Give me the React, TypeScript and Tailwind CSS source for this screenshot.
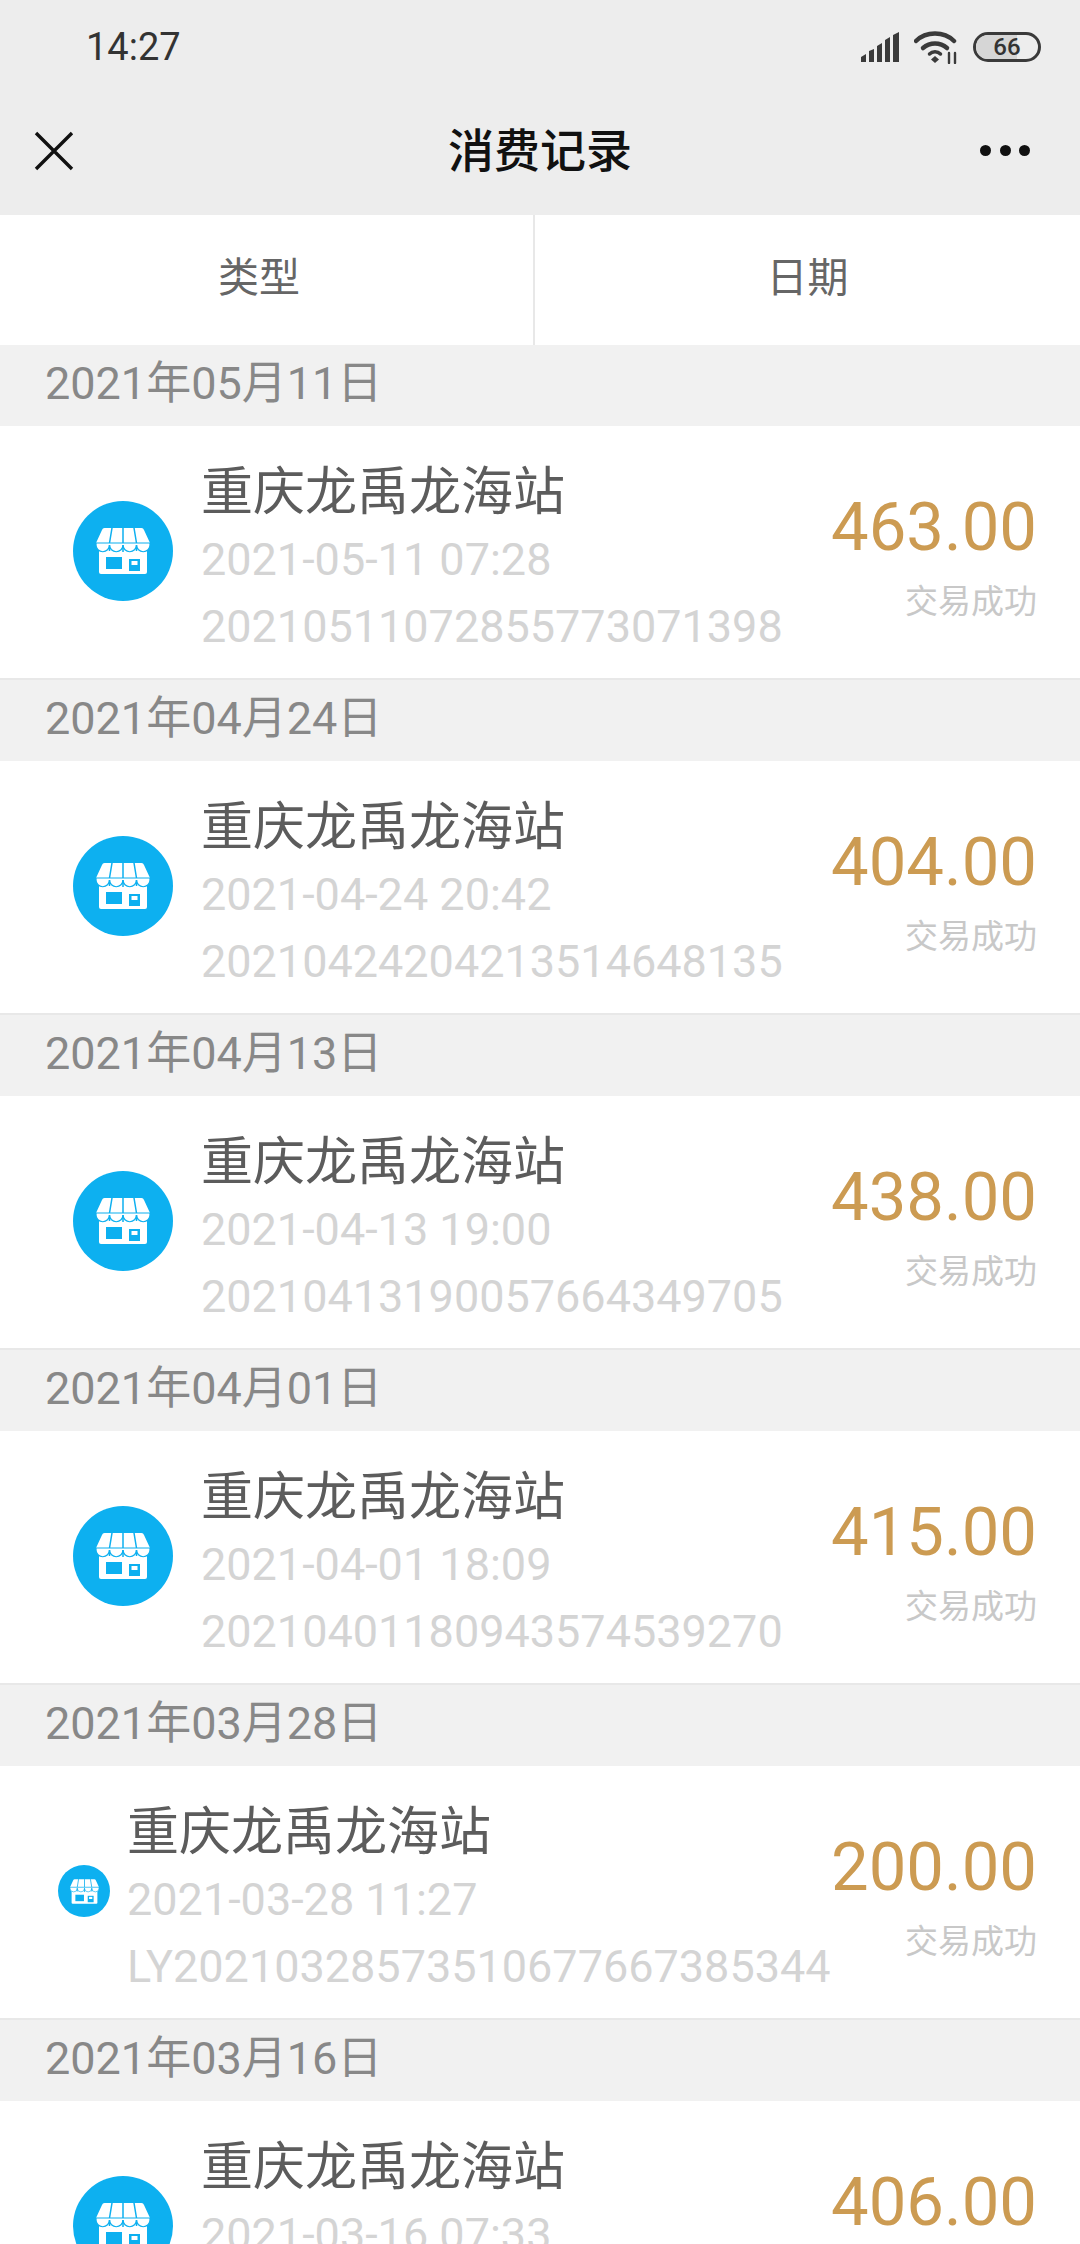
import React from 'react';

const records = [
  { day: '2021年05月11日', time: '2021-05-11 07:28', no: '20210511072855773071398', amount: '463.00' },
  { day: '2021年04月24日', time: '2021-04-24 20:42', no: '20210424204213514648135', amount: '404.00' },
  { day: '2021年04月13日', time: '2021-04-13 19:00', no: '20210413190057664349705', amount: '438.00' },
  { day: '2021年04月01日', time: '2021-04-01 18:09', no: '20210401180943574539270', amount: '415.00' },
  { day: '2021年03月28日', time: '2021-03-28 11:27', no: 'LY20210328573510677667385344', amount: '200.00', small: true },
  { day: '2021年03月16日', time: '2021-03-16 07:33', no: '', amount: '406.00' },
];

const ShopIcon = ({ small }: { small?: boolean }) => (
  <div
    className={
      small
        ? 'flex h-[52px] w-[52px] shrink-0 items-center justify-center rounded-full bg-[#0db0f0]'
        : 'flex h-[100px] w-[100px] shrink-0 items-center justify-center rounded-full bg-[#0db0f0]'
    }
  >
    <svg viewBox="0 0 54 46" className={small ? 'h-[25px] w-[29px]' : 'h-[46px] w-[54px]'}>
      <rect x="3" y="20" width="48" height="26" rx="2" fill="#fff" />
      <rect x="10" y="29" width="16" height="12" fill="#0db0f0" />
      <rect x="33" y="31" width="11" height="12" fill="#0db0f0" />
      <rect x="35.500" y="33" width="6" height="4" fill="#fff" />
      <path d="M9 0h36a3 3 0 0 1 3 2l6 13H0L6 2a3 3 0 0 1 3-2z" fill="#fff" />
      <path d="M0 15h54v2a6.750 6.750 0 0 1-13.500 0 6.750 6.750 0 0 1-13.500 0 6.750 6.750 0 0 1-13.500 0A6.750 6.750 0 0 1 0 17z" fill="#fff" stroke="#0db0f0" strokeWidth="1.200" />
      <path d="M16 0l-2.500 15M27 0v15M38 0l2.500 15M13.500 17v6M27 17v7M40.500 17v6" stroke="#0db0f0" strokeWidth="1.500" fill="none" />
    </svg>
  </div>
);

const App: React.FC = () => {
  return (
    <div className="h-[2244px] w-[1080px] overflow-hidden bg-white font-['Roboto','Noto_Sans_CJK_SC',sans-serif]">
      <div className="h-[215px] bg-[#ededed]">
        <div className="flex h-[92px] items-center justify-between pl-[86px] pr-[39px] pt-[2px]">
          <span className="text-[38px] leading-none text-[#333]">14:27</span>
          <div className="flex items-center gap-[13px]">
            <svg viewBox="0 0 40 30" className="h-[30px] w-[40px]" fill="#3a3a3a">
              <path d="M0 30v-5l5-3v8zM8 30V19l5-2v13zM16 30V14l5-3v19zM24 30V8l5-3v25zM32 30V3l6-3v30z" />
            </svg>
            <svg viewBox="0 0 46 34" className="h-[34px] w-[46px]" fill="none" stroke="#3a3a3a" strokeLinecap="round">
              <path d="M2 11C12 1 30 1 40 11" strokeWidth="4.500" />
              <path d="M9 18c7-6 17-6 24 0" strokeWidth="4.500" />
              <path d="M15.500 24c3-3 8-3 11 0" strokeWidth="3.500" />
              <path d="M21 26l4 3.500-4 3.500-4-3.500z" fill="#3a3a3a" strokeWidth="0" />
              <path d="M35 23v10M41 23v10" strokeWidth="2.400" />
            </svg>
            <div className="relative flex h-[30px] w-[68px] items-center justify-center overflow-hidden rounded-full border-[3px] border-[#3a3a3a] text-[24px] font-medium leading-none text-[#333]">
              <div className="absolute bottom-0 left-0 top-0 w-[66%] bg-[#d6d6d6]" />
              <span className="relative">66</span>
            </div>
          </div>
        </div>
        <div className="flex h-[123px] items-center justify-between pb-[6px] pl-[34px] pr-[50px]">
          <svg viewBox="0 0 40 40" className="h-[40px] w-[40px]" stroke="#111" strokeWidth="3.400" fill="none">
            <path d="M2 2l36 36M38 2L2 38" />
          </svg>
          <span className="ml-[26px] text-[46px] font-medium leading-none text-[#111]">消费记录</span>
          <div className="flex w-[50px] justify-between">
            <div className="h-[11px] w-[11px] rounded-full bg-[#111]" />
            <div className="h-[11px] w-[11px] rounded-full bg-[#111]" />
            <div className="h-[11px] w-[11px] rounded-full bg-[#111]" />
          </div>
        </div>
      </div>

      <div className="flex h-[130px] bg-white text-[41px] text-[#666]">
        <div className="flex w-[535px] items-center justify-center border-r-2 border-[#e8e8e8] pb-[2px] pr-[15px]">类型</div>
        <div className="flex flex-1 items-center justify-center pb-[2px]">日期</div>
      </div>

      {records.map((r) => (
        <div key={r.day}>
          <div className="flex h-[81px] items-center bg-[#f1f1f1] pb-[3px] pl-[45px] text-[45px] text-[#888]">{r.day}</div>
          <div className="flex h-[254px] items-center border-b-2 border-[#e8e8e8] bg-white pr-[43px]">
            <div className={r.small ? 'pb-[2px] pl-[58px]' : 'pb-[2px] pl-[73px]'}>
              <ShopIcon small={r.small} />
            </div>
            <div className={r.small ? 'ml-[17px] min-w-0 flex-1 pt-[14px]' : 'ml-[28px] min-w-0 flex-1 pt-[14px]'}>
              <div className="text-[52px] leading-[67px] text-[#5c5c5c]">重庆龙禹龙海站</div>
              <div className="whitespace-nowrap text-[45px] leading-[67px] text-[#d4d4d4]">{r.time}</div>
              <div className="h-[67px] whitespace-nowrap text-[45px] leading-[67px] text-[#d4d4d4]">{r.no}</div>
            </div>
            <div className="flex shrink-0 flex-col items-end pt-[6px]">
              <div className="text-[67px] leading-[78px] text-[#cc9b52]">{r.amount}</div>
              <div className="mt-[16px] text-[33px] leading-[40px] text-[#c8c8c8]">交易成功</div>
            </div>
          </div>
        </div>
      ))}
    </div>
  );
};

export default App;
